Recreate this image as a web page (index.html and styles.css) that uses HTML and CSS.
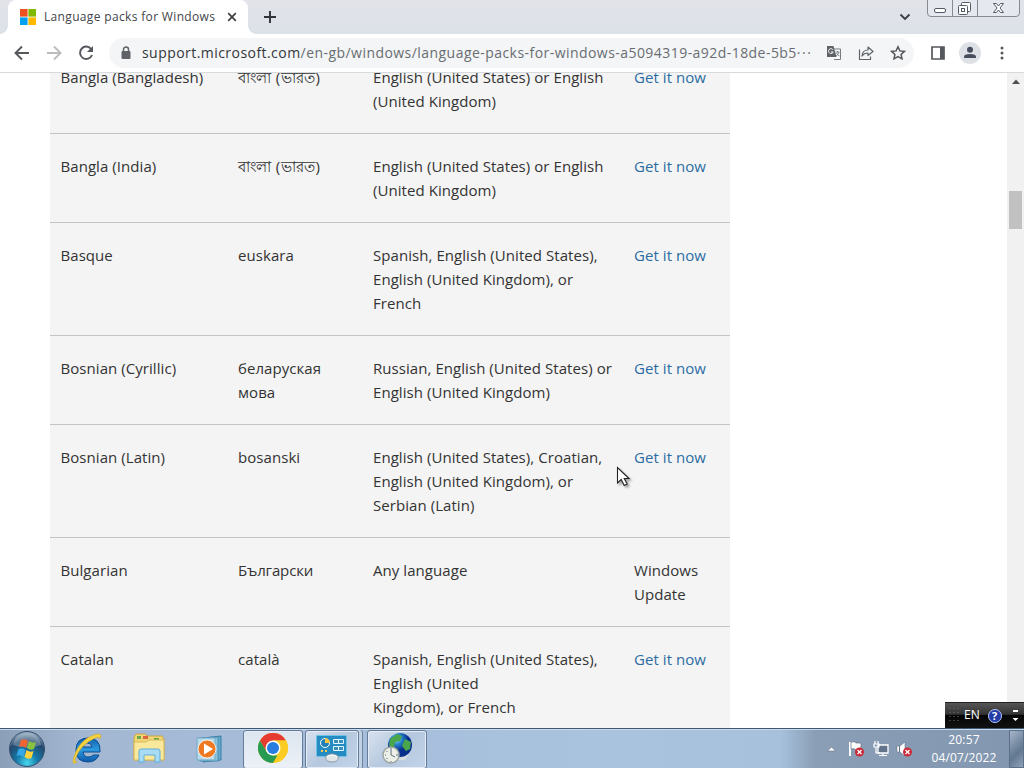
FILE: index.html
```html
<!DOCTYPE html>
<html lang="en">
<head>
<meta charset="utf-8">
<title>Language packs for Windows</title>
<link rel="stylesheet" href="styles.css">
</head>
<body>
<div class="desktop">
  <header class="tabstrip">
    <div class="tab">
      <svg class="favicon" width="16" height="16" viewBox="0 0 16 16"><path fill="#ef5022" d="M0 0h7.6v7.6H0z"/><path fill="#7fba00" d="M8.4 0H16v7.6H8.4z"/><path fill="#00a1f1" d="M0 8.4h7.6V16H0z"/><path fill="#ffb900" d="M8.4 8.4H16V16H8.4z"/></svg>
      <span class="tab-title">Language packs for Windows</span>
      <svg class="tab-close" width="10" height="10" viewBox="0 0 10 10"><path d="M1.2 1.2l7.6 7.6M8.800 1.200L1.200 8.800" stroke="#3c4043" stroke-width="1.7"/></svg>
    </div>
    <svg class="new-tab" width="14" height="14" viewBox="0 0 14 14"><path d="M7 1v12M1 7h12" stroke="#303438" stroke-width="1.9"/></svg>
    <svg class="tab-search" width="12" height="8" viewBox="0 0 12 8"><path d="M1.500 1.500L6 6l4.500-4.500" fill="none" stroke="#3c4043" stroke-width="1.900"/></svg>
    <svg class="window-controls" width="94" height="17" viewBox="0 0 94 17"><path d="M.5 0v13q0 3.500 3.500 3.500h85q3.500 0 3.500-3.500V0M25.500 0v16M50.500 0v16" fill="#e5e8ee" stroke="#858a93"/><rect x="7.500" y="8.500" width="11" height="4" rx="1.500" fill="#fff" stroke="#555b65"/><rect x="34.500" y="2.500" width="9" height="9" rx="1" fill="#fff" stroke="#555b65"/><rect x="31.500" y="5.500" width="9" height="9" rx="1" fill="#fff" stroke="#555b65"/><rect x="34.500" y="8.500" width="3" height="3" fill="#fff" stroke="#555b65"/><path d="M66.500 3.500h3l2 2.500 2-2.500h3L73 8l3.500 4.500h-3l-2-2.500-2 2.500h-3L70 8z" fill="#fff" stroke="#555b65"/></svg>
  </header>

  <nav class="toolbar">
    <svg class="nav-icon" width="16" height="16" viewBox="0 0 16 16"><path d="M15 8H2M8 1.500L1.500 8 8 14.500" fill="none" stroke="#55585c" stroke-width="1.900"/></svg>
    <svg class="nav-icon" width="16" height="16" viewBox="0 0 16 16"><path d="M1 8h13M8 1.500L14.500 8 8 14.500" fill="none" stroke="#babcbe" stroke-width="1.900"/></svg>
    <svg class="nav-icon" width="16" height="16" viewBox="0 0 16 16"><path d="M13.300 4.200A6.200 6.200 0 1 0 14 10" fill="none" stroke="#55585c" stroke-width="2"/><path d="M15 1v6H9z" fill="#55585c"/></svg>
    <div class="omnibox">
      <svg width="10" height="14" viewBox="0 0 10 14"><path d="M2.500 6V3.500a2.500 2.500 0 0 1 5 0V6" fill="none" stroke="#5f6368" stroke-width="1.500"/><rect x=".5" y="5" width="9" height="8" rx="1" fill="#5f6368"/></svg>
      <div class="url">support.microsoft.com<span class="url-path">/en-gb/windows/language-packs-for-windows-a5094319-a92d-18de-5b5<span class="ellipsis">···</span></span></div>
      <svg class="translate" width="16" height="16" viewBox="0 0 16 16"><path d="M6 4h8.500v10.500H8" fill="#f7f8f9" stroke="#777a7e"/><path d="M1 1h6.500l3 11H1z" fill="#5f6368"/><path d="M7 4.800A2.400 2.400 0 1 0 7.200 7H5" fill="none" stroke="#fff"/><path d="M9.500 7h4M11.500 6v1M13 7q-1 3-3 4M10.500 8q1 2 3 3" fill="none" stroke="#777a7e" stroke-width=".9"/></svg>
      <svg class="share" width="16" height="16" viewBox="0 0 16 16"><path d="M1.500 4.500v10h11v-3" fill="none" stroke="#5f6368" stroke-width="1.200"/><path d="M4 11q.5-6 6-6V2l5 4.500-5 4V8q-4 0-6 3z" fill="none" stroke="#5f6368" stroke-width="1.200" stroke-linejoin="round"/></svg>
      <svg class="star" width="16" height="16" viewBox="0 0 16 16"><path d="M8 1.800l1.900 4.100 4.500.5-3.300 3 .9 4.500-4-2.300-4 2.300.9-4.500-3.300-3 4.500-.5z" fill="none" stroke="#55585c" stroke-width="1.500"/></svg>
    </div>
    <svg class="side-panel" width="14" height="14" viewBox="0 0 14 14"><path d="M1 1h12v12H1z" fill="#fff" stroke="#55585c" stroke-width="1.700"/><path d="M9 1h4v12H9z" fill="#55585c"/></svg>
    <svg class="profile" width="22" height="22" viewBox="0 0 22 22"><circle cx="11" cy="11" r="11" fill="#dee1e6"/><circle cx="11" cy="7.800" r="3" fill="#484e5d"/><path d="M5 16v-1.500Q5 12 11 12t6 2.500V16z" fill="#484e5d"/></svg>
    <svg class="kebab" width="4" height="14" viewBox="0 0 4 14"><g fill="#55585c"><circle cx="2" cy="2" r="1.500"/><circle cx="2" cy="7" r="1.500"/><circle cx="2" cy="12" r="1.500"/></g></svg>
  </nav>

  <main class="viewport">
    <div class="languages">
      <div class="row"><div>Bangla (Bangladesh)</div><div class="bangla">বাংলা (ভারত)</div><div>English (United States) or English<br>(United Kingdom)</div><a class="link">Get it now</a></div>
      <div class="row"><div>Bangla (India)</div><div class="bangla">বাংলা (ভারত)</div><div>English (United States) or English<br>(United Kingdom)</div><a class="link">Get it now</a></div>
      <div class="row"><div>Basque</div><div>euskara</div><div>Spanish, English (United States),<br>English (United Kingdom), or<br>French</div><a class="link">Get it now</a></div>
      <div class="row"><div>Bosnian (Cyrillic)</div><div>беларуская<br>мова</div><div>Russian, English (United States) or<br>English (United Kingdom)</div><a class="link">Get it now</a></div>
      <div class="row"><div>Bosnian (Latin)</div><div>bosanski</div><div>English (United States), Croatian,<br>English (United Kingdom), or<br>Serbian (Latin)</div><a class="link">Get it now</a></div>
      <div class="row"><div>Bulgarian</div><div class="bulgarian">Български</div><div>Any language</div><div>Windows<br>Update</div></div>
      <div class="row"><div>Catalan</div><div>català</div><div>Spanish, English (United States),<br>English (United<br>Kingdom), or French</div><a class="link">Get it now</a></div>
    </div>
    <div class="scrollbar"><svg width="8" height="5" viewBox="0 0 8 5"><path d="M0 5l4-4.500L8 5z" fill="#505050"/></svg><div class="thumb"></div></div>
  </main>

  <footer class="taskbar">
    <svg class="start" width="38" height="38" viewBox="0 0 38 38"><defs><radialGradient id="orb" cx=".5" cy=".9" r=".9"><stop offset="0" stop-color="#48d8ed"/><stop offset=".35" stop-color="#1478a8"/><stop offset=".7" stop-color="#24486c"/><stop offset="1" stop-color="#9bb4c7"/></radialGradient></defs><circle cx="19" cy="19" r="17.500" fill="url(#orb)" stroke="#344f6c"/><path d="M5 15Q8 3 19 3t14 12Q19 20 5 15z" fill="#fff" opacity=".25"/><path d="M13 10q4-2 7 1l-2 7q-3-3-7-1z" fill="#ee6532"/><path d="M21 11q4 3 7 1l-2 7q-3 2-7-1z" fill="#8ac33e"/><path d="M10.500 19q4-2 7 1l-2 7q-3-3-7-1z" fill="#35a8e8"/><path d="M18.500 20q4 3 7 1l-2 7q-3 2-7-1z" fill="#ffd23b"/></svg>
    <svg class="ie" width="36" height="34" viewBox="0 0 36 34"><defs><linearGradient id="ie-blue" x2="0" y2="1"><stop stop-color="#1561ac"/><stop offset=".5" stop-color="#2d9be0"/><stop offset="1" stop-color="#0e58a8"/></linearGradient></defs><path d="M31 20H14q1 5 5 5 4 0 5-2h6q-3 7-11 7-12 0-12-12T19 6q13 0 12 14zM14 15h9q-.5-4-4.500-4T14 15z" fill="url(#ie-blue)" stroke="#0b4c91"/><path d="M8 30q-6 4-3-5Q10 8 25 3q9-3 6 4 0-3-5-1Q11 13 6 27q-1 3 2 3z" fill="#f5d343" stroke="#d9a817" stroke-width=".6"/></svg>
    <svg class="explorer" width="34" height="32" viewBox="0 0 34 32"><path d="M2 4l2-3h9l2 2h15l2 3v21H2z" fill="#f2d675" stroke="#c9a545"/><path d="M5 3h4v3H5zM22 5h5v2h-5z" fill="#68a94a"/><path d="M11 3h5v3h-5z" fill="#dc6544"/><path d="M2 9h12l3-2h15v20H2z" fill="#fae99c" stroke="#d6b95c"/><path d="M7 29V18q0-2 2-2h17q2 0 2 2v11h-5v-7H12v7z" fill="#a9dcf4" stroke="#5faeda"/></svg>
    <svg class="media" width="30" height="28" viewBox="0 0 30 28"><path d="M8 3l18-2v24l-18 2z" fill="#65a9cc" stroke="#377eaa"/><path d="M5 3l18-1v24H5z" fill="#8bc2dd" stroke="#4c8eb2"/><path d="M2 3h18v22H2z" fill="#b9dbea" stroke="#71a9c5"/><circle cx="12" cy="14" r="9" fill="#ef7921" stroke="#fff" stroke-width=".8"/><path d="M9 8.500v11l9-5.500z" fill="#fff"/></svg>
    <div class="task task-chrome"><svg width="30" height="30" viewBox="0 0 30 30"><circle cx="15" cy="15" r="15" fill="#fbcd24"/><path d="M2 7.500A15 15 0 0 1 28 7.500H15L8.500 18.700z" fill="#e53b30"/><path d="M2 7.500l6.500 11.200L15 22.500h6.500L15 30A15 15 0 0 1 2 7.500z" fill="#279b51"/><path d="M15 7.500h13A15 15 0 0 1 15 30l6.500-11.200z" fill="#fbcd24"/><circle cx="15" cy="15" r="7.500" fill="#fff"/><circle cx="15" cy="15" r="6" fill="#287de1"/></svg></div>
    <div class="task task-panel"><svg width="34" height="30" viewBox="0 0 34 30"><rect x="1.500" y="2.500" width="30" height="21" rx="1" fill="#258bc3" stroke="#71c2e4"/><circle cx="10" cy="10" r="4.500" fill="#2280b8" stroke="#fff"/><path d="M10 10V5a5 5 0 0 1 5 5z" fill="#f4c541"/><path d="M18.500 6.500h10v4h-10zM18.500 13.500h10v4h-10zM23.500 6.500v4M23.500 13.500v4" fill="#398fb9" stroke="#e3f5ff"/><path d="M6 18h2M10 18h2" stroke="#fac84b" stroke-width="2"/><ellipse cx="17" cy="25" rx="6.500" ry="4" fill="#e0e6e8" stroke="#899ca7"/><path d="M12 24q5-4 10 0" stroke="#fff" fill="none"/></svg></div>
    <div class="task task-time"><svg width="32" height="34" viewBox="0 0 32 34"><defs><radialGradient id="globe" cx=".35" cy=".25"><stop stop-color="#a4e8f8"/><stop offset=".45" stop-color="#2684cc"/><stop offset="1" stop-color="#082e8c"/></radialGradient></defs><path d="M17 27l11-4-4 6h-8z" fill="#d5dce0"/><circle cx="19" cy="14" r="12" fill="url(#globe)"/><path d="M9 8l7-5 5 2-2 5-5 1-1 6-5-2zM24 8l6 3-1 7-4 2-4-5z" fill="#4aa64a"/><circle cx="10" cy="24" r="8" fill="#edf0e8" stroke="#9da5a1" stroke-width="1.500"/><path d="M10 18v6l4 2M10 17v1M10 30v1M4 24h1M15 24h2M5.500 20l1 1M5.500 28l1-1" fill="none" stroke="#5d6f76"/></svg></div>
    <div class="tray">
      <svg width="9" height="6" viewBox="0 0 9 6"><path d="M.5 5h8L4.500 1z" fill="#fff" stroke="#65748a" stroke-width=".6"/></svg>
      <svg class="flag" width="17" height="16" viewBox="0 0 17 16"><path d="M2 1v14" stroke="#fff" stroke-width="2"/><path d="M3 1q4-1 5 1h5v7H8Q7 7 3 8z" fill="#fff" stroke="#5f6e82" stroke-width=".7"/><circle cx="11.500" cy="11" r="4.500" fill="#cb2937"/><path d="M9.500 9l4 4M13.500 9l-4 4" stroke="#fff" stroke-width="1.300"/></svg>
      <svg class="network" width="16" height="16" viewBox="0 0 16 16"><path d="M5 4h10v8H5z" fill="#62738c" stroke="#fff" stroke-width="1.300"/><path d="M10 12v2M6 14.500h8M2 0v3M5 0v3M1 3h5v3H1zM3 6v6h4" fill="none" stroke="#fff" stroke-width="1.200"/></svg>
      <svg class="sound" width="17" height="16" viewBox="0 0 17 16"><path d="M1 5h3l5-4v14l-5-4H1z" fill="#fff" stroke="#5f6e82" stroke-width=".5"/><path d="M3.500 5v6" stroke="#64748b"/><circle cx="11.500" cy="11" r="4.500" fill="#cb2937"/><path d="M9.500 9l4 4M13.500 9l-4 4" stroke="#fff" stroke-width="1.300"/></svg>
      <div class="clock"><div>20:57</div><div class="date">04/07/2022</div></div>
      <div class="show-desktop"></div>
    </div>
  </footer>

  <div class="language-bar"><svg width="10" height="18" viewBox="0 0 10 18"><path d="M1 1v16M5 1v16M9 1v16" stroke="#777" stroke-dasharray="1 3"/></svg><span>EN</span><b class="help">?</b><svg class="options" width="7" height="14" viewBox="0 0 7 14"><path d="M1 1h5v2H1zM.5 9h6l-3 3z" fill="#fff"/></svg></div>
  <svg class="cursor" width="16" height="22" viewBox="0 0 16 22"><path d="M1.500 1.500v15.500l3.700-3.500 3 6 3-1.500-3-5.500h4.800z" fill="#fff" stroke="#222" stroke-width="1.100"/></svg>
</div>
</body>
</html>
```
FILE: styles.css
```css
* { box-sizing: border-box; }
body { margin: 0; overflow: hidden; background: #fff; font-family: "Open Sans", "Noto Sans", sans-serif; }
svg { display: block; flex-shrink: 0; }
.desktop { position: relative; display: flex; flex-direction: column; width: 1024px; height: 768px; overflow: hidden; }
.tabstrip { display: flex; height: 34px; flex-shrink: 0; padding-left: 8px; background: linear-gradient(#e2e3e9, #dce1e8); }
.tab { position: relative; display: flex; align-items: center; width: 240px; height: 34px; padding-left: 12px; background: #fff; border-radius: 8px 8px 0 0; }
.tab::before, .tab::after { content: ""; position: absolute; bottom: 0; width: 8px; height: 8px; }
.tab::before { left: -8px; background: radial-gradient(circle at 0 0, transparent 7.5px, #fff 8px); }
.tab::after { right: -8px; background: radial-gradient(circle at 100% 0, transparent 7.5px, #fff 8px); }
.tab-title { width: 172px; margin-left: 8px; padding-bottom: 1px; font-size: 12px; letter-spacing: .34px; color: #42454a; white-space: nowrap; }
.tab-close { margin-left: 11px; }
.new-tab { margin: 10px 0 0 15px; }
.tab-search { margin: 13px 0 0 auto; }
.window-controls { margin: 0 3px 0 16px; }
.toolbar { display: flex; align-items: center; height: 39px; flex-shrink: 0; padding: 0 20px 0 14px; background: #fff; border-bottom: 1px solid #d7dadd; }
.nav-icon { margin-right: 16px; }
.omnibox { display: flex; align-items: center; width: 805px; height: 30px; margin-left: -1px; padding-left: 12px; border-radius: 15px; background: #f3f5f6; }
.url { width: 684px; margin-left: 11px; padding-bottom: 1px; color: #34373b; font-size: 14px; letter-spacing: .45px; white-space: nowrap; }
.url-path { color: #696d72; }
.ellipsis { letter-spacing: 1.6px; }
.share, .star { margin-left: 16px; }
.side-panel { margin-left: 17px; }
.profile { margin-left: 14px; }
.kebab { margin-left: auto; }
.viewport { display: flex; justify-content: space-between; height: 655px; flex-shrink: 0; overflow: hidden; padding-left: 50px; }
.languages { width: 680px; margin-top: -28px; }
.row { display: grid; grid-template-columns: 177.5px 135px 261px 96px; padding: 20px 0 20px 10.5px; background: #f4f4f4; border-bottom: 1px solid #c3c4c5; color: #333; font-size: 15px; line-height: 24px; letter-spacing: .06px; white-space: nowrap; }
.bangla { letter-spacing: .3px; }
.bulgarian { letter-spacing: -.15px; }
.link { color: #2b6ca3; }
.scrollbar { display: flex; flex-direction: column; align-items: center; width: 17px; padding-top: 6px; background: #f1f1f1; }
.thumb { width: 13px; height: 38px; margin-top: 107px; background: #c1c1c1; }
.taskbar { display: flex; align-items: center; height: 40px; flex-shrink: 0; padding: 1px 0 0 8px; border-top: 1px solid #3f5873; box-shadow: inset 0 1px #c9daea; background: linear-gradient(90deg, #8c9fb9 0, #a3b7d2 80px, #a6bdda 300px, #a9c3df 620px, #a7c1dd 780px, #8a9fb6 815px, #8296b0 1024px); }
.ie { margin-left: 23px; }
.explorer { margin-left: 27px; }
.media { margin-left: 29px; }
.task { display: flex; align-items: center; justify-content: center; height: 39px; border: 1px solid #657b98; border-radius: 3px; box-shadow: inset 0 0 0 1px #e4edf7; background: linear-gradient(135deg, #d7e2ef, #b6c8de 50%, #c2d4e8); }
.task svg { margin-top: -2px; }
.task-chrome { width: 60px; margin-left: 18px; background: linear-gradient(#dce5ef, #edf1f7); }
.task-panel { width: 54px; margin-left: 2px; box-shadow: inset 0 0 0 1px #e4edf7, 3px 0 0 #c0d2e6, 4px 0 0 #6d829d; }
.task-time { width: 60px; margin-left: 8px; }
.tray { display: flex; align-items: center; height: 38px; margin-left: auto; }
.flag { margin-left: 12px; }
.network { margin-left: 8px; }
.sound { margin-left: 7px; }
.clock { width: 80px; margin-left: 11px; color: #fff; font-size: 12px; line-height: 18px; text-align: center; letter-spacing: .15px; }
.show-desktop { width: 15px; height: 38px; margin-left: 5px; border: 1px solid #596f8a; background: linear-gradient(135deg, #a6b6c9, #627791 60%, #91a3b9); }
.language-bar { position: absolute; left: 945px; top: 702px; display: flex; align-items: center; width: 79px; height: 26px; padding: 0 5px 0 4px; background: linear-gradient(#555 0, #343434 45%, #050505 50%, #111); border-top: 1px solid #222; color: #fff; font-size: 12px; }
.language-bar span { margin: -2px 0 0 5px; }
.help { width: 14px; height: 14px; margin-left: 8px; border: 1px solid #b8c5ff; border-radius: 50%; background: #233ca8; font-size: 11px; line-height: 12px; text-align: center; }
.options { margin-left: auto; }
.cursor { position: absolute; left: 616px; top: 466px; filter: drop-shadow(2px 2px 1px #0005); }
```
